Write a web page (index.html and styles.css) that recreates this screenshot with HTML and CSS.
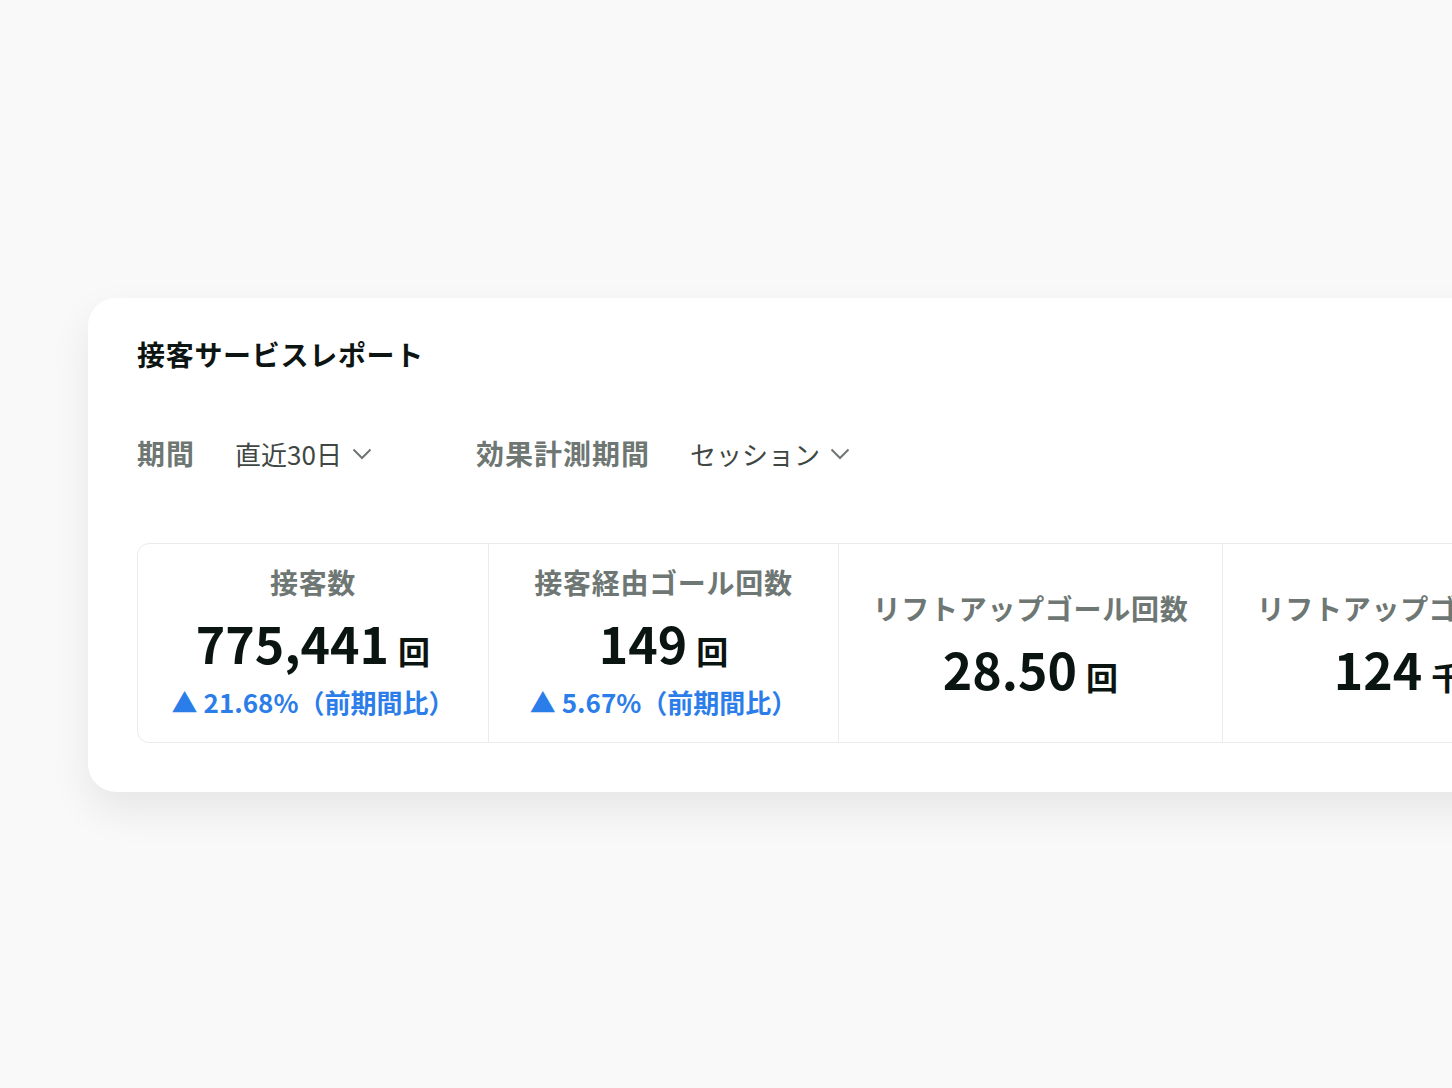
FILE: index.html
```html
<!DOCTYPE html>
<html lang="ja">
<head>
<meta charset="utf-8">
<title>接客サービスレポート</title>
<link rel="stylesheet" href="styles.css">
</head>
<body>
<div class="page">
  <section class="card">
    <h1 class="title">接客サービスレポート</h1>
    <div class="filters">
      <div class="filter">
        <span class="filter-label">期間</span>
        <span class="select">直近30日
          <svg class="chev" width="20" height="12" viewBox="0 0 20 12"><path d="M1.5 1.5 L10 10 L18.5 1.5" fill="none" stroke="#6f7773" stroke-width="2"/></svg>
        </span>
      </div>
      <div class="filter">
        <span class="filter-label">効果計測期間</span>
        <span class="select">セッション
          <svg class="chev" width="20" height="12" viewBox="0 0 20 12"><path d="M1.5 1.5 L10 10 L18.5 1.5" fill="none" stroke="#6f7773" stroke-width="2"/></svg>
        </span>
      </div>
    </div>
    <div class="stats">
      <div class="stat w350 with-change">
        <div class="stat-label">接客数</div>
        <div class="stat-value">775,441<span class="unit">回</span></div>
        <div class="stat-change"><span class="tri">▲</span>21.68%（前期間比）</div>
      </div>
      <div class="stat w350 with-change">
        <div class="stat-label">接客経由ゴール回数</div>
        <div class="stat-value">149<span class="unit">回</span></div>
        <div class="stat-change"><span class="tri">▲</span>5.67%（前期間比）</div>
      </div>
      <div class="stat w384 no-change">
        <div class="stat-label">リフトアップゴール回数</div>
        <div class="stat-value">28.50<span class="unit">回</span></div>
      </div>
      <div class="stat w384 no-change">
        <div class="stat-label">リフトアップゴール金額</div>
        <div class="stat-value">124<span class="unit">千円</span></div>
      </div>
    </div>
  </section>
</div>
</body>
</html>
```
FILE: styles.css
```css
html, body {
  margin: 0;
  padding: 0;
  overflow: hidden;
}
body {
  background: #f9f9f9;
  font-family: "Noto Sans CJK JP", "Noto Sans", sans-serif;
  width: 1452px;
  height: 1088px;
}
.page {
  padding: 298px 0 0 88px;
}
.card {
  width: 1500px;
  box-sizing: border-box;
  background: #fff;
  border-radius: 28px;
  box-shadow: 0 18px 40px rgba(0, 0, 0, 0.08);
  padding: 36px 0 49px 49px;
}
.title {
  margin: 0;
  font-size: 28px;
  line-height: 40px;
  font-weight: 700;
  color: #0d1512;
  letter-spacing: 0.7px;
}
.filters {
  display: flex;
  align-items: center;
  margin-top: 59px;
  height: 40px;
}
.filter {
  display: flex;
  align-items: center;
}
.filter + .filter {
  margin-left: 104px;
}
.filter-label {
  font-size: 28px;
  font-weight: 700;
  color: #6e7773;
  letter-spacing: 1px;
  margin-right: 40px;
}
.select {
  display: flex;
  align-items: center;
  font-size: 26px;
  color: #3f4744;
}
.chev {
  margin-left: 10px;
  margin-top: 1px;
}
.stats {
  display: flex;
  margin-top: 70px;
  height: 200px;
  box-sizing: border-box;
  border: 1px solid #ebebeb;
  border-radius: 12px;
  width: 1500px;
}
.stat {
  display: flex;
  flex-direction: column;
  align-items: center;
  justify-content: center;
  box-sizing: border-box;
  flex: none;
}
.with-change {
  padding-bottom: 5px;
}
.no-change {
  padding-top: 7px;
}
.stat + .stat {
  border-left: 1px solid #ebebeb;
}
.w350 { width: 350px; }
.w384 { width: 384px; }
.stat-label {
  font-size: 28px;
  line-height: 40px;
  font-weight: 700;
  color: #6e7773;
  letter-spacing: 0.7px;
}
.stat-value {
  margin-top: 10px;
  font-size: 50px;
  line-height: 60px;
  font-weight: 700;
  color: #0a1411;
  display: flex;
  align-items: baseline;
}
.unit {
  font-size: 32px;
  margin-left: 9px;
}
.stat-change {
  margin-top: 4px;
  font-size: 26px;
  line-height: 36px;
  font-weight: 700;
  color: #2b7de9;
  display: flex;
  align-items: center;
}
.tri {
  font-size: 26px;
  margin-right: 6px;
}
```
